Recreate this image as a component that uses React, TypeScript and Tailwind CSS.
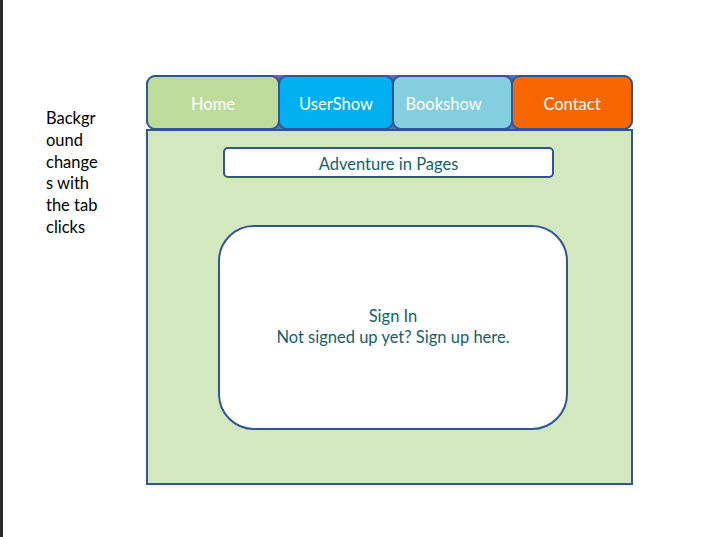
import React from 'react';

const tabs = [
  { label: 'Home', width: 'w-[134px]', color: 'bg-[#bddb9b]', pad: '' },
  { label: 'UserShow', width: 'w-[116px]', color: 'bg-[#00b0f0]', pad: '' },
  { label: 'Bookshow', width: 'w-[121px]', color: 'bg-[#83cfe0]', pad: 'pr-[18px]' },
  { label: 'Contact', width: 'w-[122px]', color: 'bg-[#f76600]', pad: '' },
];

const App: React.FC = () => {
  return (
    <div className="h-[537px] w-[721px] bg-white border-l-[3px] border-[#2b2b2b] flex font-['Lato','Open_Sans',sans-serif] overflow-hidden">
      {/* side note */}
      <div className="w-[143px] pl-[43px] pt-[108px] text-black text-[16.5px] leading-[21.8px]">
        Backgr<br />
        ound<br />
        change<br />
        s with<br />
        the tab<br />
        clicks
      </div>

      {/* wireframe */}
      <div className="pt-[75px] w-[487px]">
        <div className="flex h-[55px] bg-[#4a76b8] rounded-[10px]">
          {tabs.map((tab, i) => (
            <div
              key={tab.label}
              className={`${tab.width} ${tab.color} ${tab.pad} ${i > 0 ? '-ml-[2px]' : ''} h-full pt-[4px] border-2 border-[#2f5597] rounded-[9px] flex items-center justify-center text-white text-[16.5px]`}
            >
              {tab.label}
            </div>
          ))}
        </div>

        <div className="-mt-px h-[356px] bg-[#d3e8be] border-2 border-[#2f5597] flex flex-col">
          <div className="ml-[75px] mt-[16px] w-[331px] h-[31px] pt-[3px] bg-white border-2 border-[#2f5597] rounded-[5px] flex items-center justify-center text-[#165f6b] text-[16.5px]">
            Adventure in Pages
          </div>
          <div className="ml-[70px] mt-[47px] w-[350px] h-[205px] bg-white border-2 border-[#2f5597] rounded-[36px] flex flex-col items-center justify-center text-[#165f6b] text-[16.5px] leading-[21px] pb-[2px]">
            <span>Sign In</span>
            <span>Not signed up yet? Sign up here.</span>
          </div>
        </div>
      </div>
    </div>
  );
};

export default App;
